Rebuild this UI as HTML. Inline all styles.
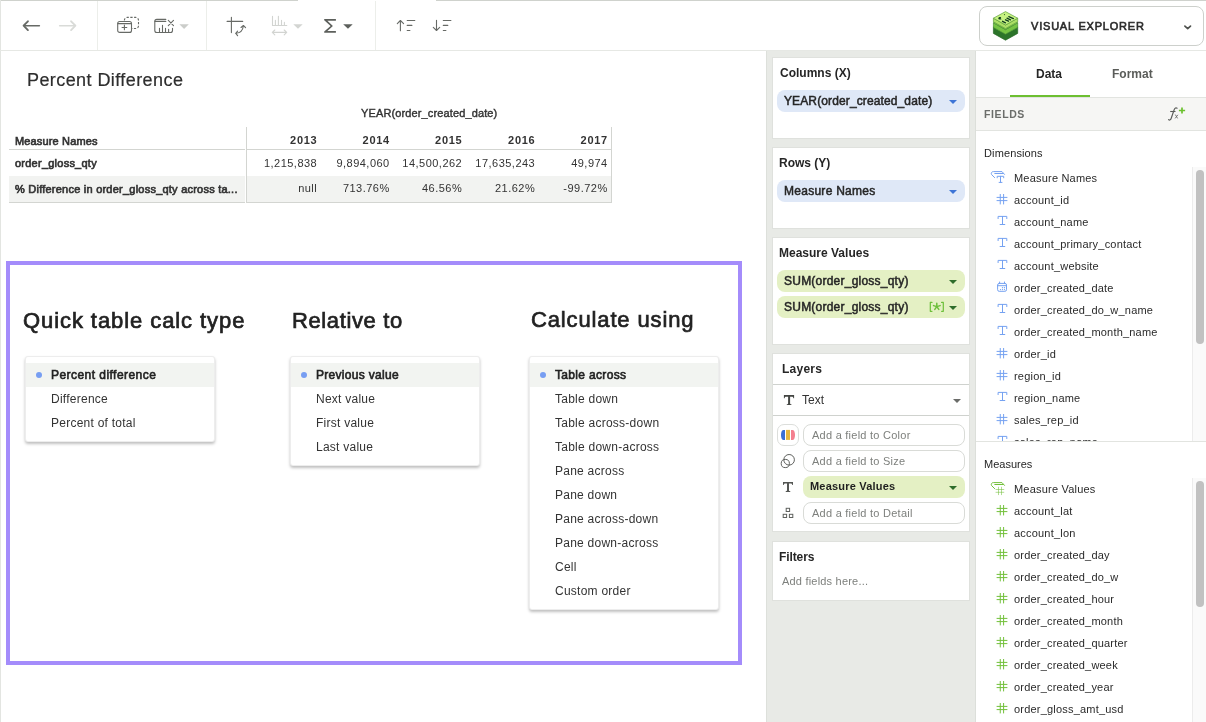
<!DOCTYPE html>
<html><head><meta charset="utf-8">
<style>
*{box-sizing:border-box;margin:0;padding:0}
html,body{width:1206px;height:722px;overflow:hidden;background:#fff}
body{position:relative;font-family:"Liberation Sans",sans-serif;color:#333}
.a{position:absolute}
.t{position:absolute;white-space:nowrap;line-height:1}
.hl{position:absolute;height:1px}
.vl{position:absolute;width:1px}
svg{position:absolute;overflow:visible}
/* menus */
.menu{position:absolute;top:356px;width:190px;background:#fff;border:1px solid rgba(0,0,0,0.07);border-radius:3px;box-shadow:0 2px 3px rgba(0,0,0,0.25);padding-top:6px;padding-bottom:6px}
.mi{position:relative;height:24px;font-size:12px;letter-spacing:0.25px;color:#333;padding-left:25px;line-height:24px;white-space:nowrap}
.mi.sel{background:#f2f4f1;color:#222;letter-spacing:0.3px;-webkit-text-stroke:0.6px #222}
.mi.sel:before{content:"";position:absolute;left:10px;top:9px;width:6px;height:6px;border-radius:50%;background:#779ef2}
/* cards */
.card{position:absolute;left:772px;width:198px;background:#fff;border:1px solid #dfe1dd}
.pill{position:absolute;left:4px;width:188px;height:22px;border-radius:8px;font-size:12px;line-height:22px;padding-left:7px;letter-spacing:0.15px;color:#222;white-space:nowrap}
.pb{background:#dfe8f7}
.pg{background:#e4f0c4}
.caret{position:absolute;width:0;height:0;border-left:4px solid transparent;border-right:4px solid transparent;border-top:4px solid #3d74d6}
.hd{font-size:22px;color:#222;-webkit-text-stroke:0.7px #222}
.fld{position:absolute;left:1014px;font-size:11px;letter-spacing:0.2px;color:#333;white-space:nowrap;line-height:1}
</style></head><body><div id="root" style="position:absolute;left:0;top:0;width:1206px;height:722px;will-change:transform">

<!-- outer borders -->
<div class="hl" style="left:0;top:0;width:298px;background:#cfd2cd"></div>
<div class="hl" style="left:436px;top:0;width:770px;background:#cfd2cd"></div>
<div class="vl" style="left:0;top:0;height:722px;background:#e3e5e1"></div>

<!-- toolbar -->
<div class="hl" style="left:0;top:50px;width:1206px;background:#e6e8e4"></div>
<div class="vl" style="left:97px;top:1px;height:49px;background:#eceeea"></div>
<div class="vl" style="left:206px;top:1px;height:49px;background:#eceeea"></div>
<div class="vl" style="left:375px;top:1px;height:49px;background:#eceeea"></div>

<!-- Visual explorer button -->
<div class="a" style="left:979px;top:6px;width:225px;height:40px;border:1px solid #cdd0cc;border-radius:8px;background:#fff"></div>
<div class="t" style="left:1031px;top:21px;font-size:11px;letter-spacing:0.8px;color:#2b2b2b;-webkit-text-stroke:0.6px #2b2b2b">VISUAL EXPLORER</div>
<svg style="left:0;top:0" width="1206" height="50" viewBox="0 0 1206 50">
<g fill="none" stroke="#676a66" stroke-width="1.5" stroke-linecap="round" stroke-linejoin="round">
 <!-- back -->
 <path d="M39.4 25.7H24.6" stroke-width="1.45"/><path d="M27.9 21.3L23.6 25.7L27.9 30.1" stroke-width="1.9"/>
</g>
<g fill="none" stroke="#d9dbd8" stroke-width="1.8" stroke-linecap="round" stroke-linejoin="round">
 <path d="M59.6 25.7H74.4" stroke-width="1.45"/><path d="M71.1 21.3L75.4 25.7L71.1 30.1" stroke-width="1.9"/>
</g>
<g fill="none" stroke="#676a66" stroke-width="1.1" stroke-linecap="round" stroke-linejoin="round">
 <!-- new sheet -->
 <path d="M119.7 21.5H129.5A2 2 0 0 1 131.5 23.5V30.4A2 2 0 0 1 129.5 32.4H119.7A2 2 0 0 1 117.7 30.4V23.5A2 2 0 0 1 119.7 21.5Z"/>
 <path d="M117.9 23.6H131.3"/>
 <path d="M122.1 27.5H126.8M124.4 25.1V29.8"/>
 <path d="M124.4 20.4V20.1A2.8 2.8 0 0 1 127.2 17.4H135.7A2.8 2.8 0 0 1 138.5 20.2V25.7A2.8 2.8 0 0 1 135.7 28.5H131.8" stroke-dasharray="2.3 1.5" stroke-linecap="butt"/>
 <!-- clear sheet -->
 <path d="M165.8 19.4H156.8A2 2 0 0 0 154.8 21.4V30.5A2 2 0 0 0 156.8 32.5H170.5A2 2 0 0 0 172.5 30.5V28.3"/>
 <path d="M155 21.4H165.8"/>
 <path d="M159.5 32.4V28.3M162.5 32.4V25.3M165.5 32.4V28.3M168.6 32.4V29.3"/>
 <path d="M168.3 20.4L173.5 25.6M173.5 20.4L168.3 25.6"/>
 <!-- swap -->
 <path d="M231.4 17.2V32.6M227.1 21.4H242.7"/>
 <path d="M236 33.3C239.5 33 242.8 31 243.3 26"/>
 <path d="M237.6 31.2L235.8 33.4L237.6 35.7M241 27.5L243.4 25.5L245.6 27.6"/>
 <!-- sort asc -->
 <path d="M400.4 20.6V30.8M397.3 23.6L400.4 20.5L403.6 23.6"/>
 <path d="M407.2 20.5H414.8M407.2 25.4H411.9M407.2 30.5H409.9"/>
 <!-- sort desc -->
 <path d="M436.5 20.2V30.4M433.3 27.4L436.5 30.5L439.7 27.4"/>
 <path d="M443.3 20.5H450.9M443.3 25.4H447.8M443.3 30.5H445.9"/>
</g>
<g fill="none" stroke="#d2d4d1" stroke-width="1.1" stroke-linecap="round" stroke-linejoin="round">
 <path d="M272.5 16.3V25.5H286.8M275.4 25.5V20.4M278.4 25.5V16.3M281.5 25.5V20.4M284.4 25.5V22.4"/>
 <path d="M272.4 32.4H286.6M274.8 30L272.3 32.4L274.8 34.8M284.2 30L286.7 32.4L284.2 34.8"/>
</g>
<!-- sigma -->
<path d="M324.2 19H335.9V20.8H327.4L332.9 25.9L327.4 31H335.9V32.8H324.2V31.6L330.6 25.9L324.2 20.2Z" fill="#5d605c"/>
<!-- carets -->
<path d="M179.4 24.2H188.8L184.1 29Z" fill="#cbcdca"/>
<path d="M293.3 24.3H302.7L298 28.7Z" fill="#d3d5d2"/>
<path d="M343.2 24.2H352.7L347.95 28.8Z" fill="#5d605c"/>
<!-- VE chevron -->
<path d="M1184.9 26.1L1187.7 28.6L1190.5 26.1" fill="none" stroke="#4f524e" stroke-width="1.7" stroke-linecap="round" stroke-linejoin="round"/>
<!-- VE logo -->
<path d="M993.4 27.2L1005.5 34.0L1017.7 27.2V33.4L1005.5 40.2L993.4 33.4Z" fill="#2c742a" stroke="#2a6a28" stroke-width="0.7" stroke-linejoin="round"/><path d="M993.4 27.2L1005.5 20.6L1017.7 27.2L1005.5 34.0Z" fill="#3d8a34" stroke="#2a6a28" stroke-width="0.7" stroke-linejoin="round"/><path d="M993.4 22.8L1005.5 29.6L1017.7 22.8V27.4L1005.5 34.2L993.4 27.4Z" fill="#76c443" stroke="#4d9438" stroke-width="0.7" stroke-linejoin="round"/><path d="M993.4 22.8L1005.5 16.200000000000003L1017.7 22.8L1005.5 29.6Z" fill="#8fd452" stroke="#4d9438" stroke-width="0.7" stroke-linejoin="round"/><path d="M993.4 18.2L1005.5 25.0L1017.7 18.2V21.8L1005.5 28.6L993.4 21.8Z" fill="#acdf66" stroke="#5f9f3c" stroke-width="0.7" stroke-linejoin="round"/><path d="M993.4 18.2L1005.5 11.6L1017.7 18.2L1005.5 25.0Z" fill="#c6f282" stroke="#5f9f3c" stroke-width="0.7" stroke-linejoin="round"/><g stroke="#123f20" stroke-width="1.3" stroke-linecap="round" fill="none">
 <path d="M1008.8 16.6L1013.4 18.6M1007 18.2L1010.5 19.9M1005.5 19.8L1008.5 21.2M1002.5 21.3L1005.5 22.8"/>
</g><path d="M998.3 18.4C998.3 17.4 999.7 16.9 1001.2 17.2L1000.6 18.3L1001.6 19.2C1000 19.9 998.3 19.4 998.3 18.4Z" fill="#123f20"/><circle cx="1004.5" cy="14.6" r="0.6" fill="#2f5f2a"/>
</svg>


<!-- main title -->
<div class="t" style="left:27px;top:71px;font-size:18px;letter-spacing:0.42px;color:#2e2e2e;-webkit-text-stroke:0.2px #2e2e2e">Percent Difference</div>

<!-- table -->
<div class="t" style="left:361px;top:108px;font-size:11px;letter-spacing:0.13px;color:#333;-webkit-text-stroke:0.4px #333">YEAR(order_created_date)</div>


<!-- table lines -->
<div class="vl" style="left:246px;top:127px;height:76px;background:#d3d5d1"></div>
<div class="vl" style="left:611px;top:127px;height:76px;background:#d3d5d1"></div>
<div class="hl" style="left:9px;top:149px;width:236px;background:#d3d5d1"></div>
<div class="hl" style="left:247px;top:149px;width:364px;background:#d3d5d1"></div>
<div class="a" style="left:9px;top:176px;width:236px;height:26px;background:#f2f3f1"></div>
<div class="a" style="left:247px;top:176px;width:364px;height:26px;background:#f2f3f1"></div>
<div class="hl" style="left:9px;top:202px;width:236px;background:#d3d5d1"></div>
<div class="hl" style="left:247px;top:202px;width:364px;background:#d3d5d1"></div>
<div class="t" style="left:15px;top:136px;font-size:11px;letter-spacing:0.15px;color:#333;-webkit-text-stroke:0.65px #333">Measure Names</div>
<div class="t" style="left:15px;top:158px;font-size:11px;letter-spacing:0.24px;color:#333;-webkit-text-stroke:0.65px #333">order_gloss_qty</div>
<div class="t" style="left:15px;top:184px;font-size:11px;letter-spacing:0.23px;color:#333;-webkit-text-stroke:0.65px #333">% Difference in order_gloss_qty across ta...</div>
<div class="t" style="right:888.5px;top:135px;font-size:11px;font-weight:bold;letter-spacing:0.75px;color:#333">2013</div>
<div class="t" style="right:888.8px;top:158px;font-size:11px;letter-spacing:0.48px;color:#333">1,215,838</div>
<div class="t" style="right:888.8px;top:183px;font-size:11px;letter-spacing:0.48px;color:#333">null</div>
<div class="t" style="right:816px;top:135px;font-size:11px;font-weight:bold;letter-spacing:0.75px;color:#333">2014</div>
<div class="t" style="right:816.3px;top:158px;font-size:11px;letter-spacing:0.48px;color:#333">9,894,060</div>
<div class="t" style="right:816.3px;top:183px;font-size:11px;letter-spacing:0.48px;color:#333">713.76%</div>
<div class="t" style="right:743.5px;top:135px;font-size:11px;font-weight:bold;letter-spacing:0.75px;color:#333">2015</div>
<div class="t" style="right:743.8px;top:158px;font-size:11px;letter-spacing:0.48px;color:#333">14,500,262</div>
<div class="t" style="right:743.8px;top:183px;font-size:11px;letter-spacing:0.48px;color:#333">46.56%</div>
<div class="t" style="right:670.5px;top:135px;font-size:11px;font-weight:bold;letter-spacing:0.75px;color:#333">2016</div>
<div class="t" style="right:670.8px;top:158px;font-size:11px;letter-spacing:0.48px;color:#333">17,635,243</div>
<div class="t" style="right:670.8px;top:183px;font-size:11px;letter-spacing:0.48px;color:#333">21.62%</div>
<div class="t" style="right:598px;top:135px;font-size:11px;font-weight:bold;letter-spacing:0.75px;color:#333">2017</div>
<div class="t" style="right:598.3px;top:158px;font-size:11px;letter-spacing:0.48px;color:#333">49,974</div>
<div class="t" style="right:598.3px;top:183px;font-size:11px;letter-spacing:0.48px;color:#333">-99.72%</div>

<!-- purple box -->
<div class="a" style="left:6px;top:261px;width:736px;height:404px;border:4px solid #a48cfb"></div>

<div class="t hd" style="left:23px;top:310px;letter-spacing:0.92px">Quick table calc type</div>
<div class="t hd" style="left:292px;top:310px;letter-spacing:0.62px">Relative to</div>
<div class="t hd" style="left:531px;top:309px;letter-spacing:0.86px">Calculate using</div>

<div class="menu" style="left:25px">
<div class="mi sel" style="letter-spacing:0.45px">Percent difference</div>
<div class="mi">Difference</div>
<div class="mi">Percent of total</div>
</div>
<div class="menu" style="left:290px">
<div class="mi sel">Previous value</div>
<div class="mi">Next value</div>
<div class="mi">First value</div>
<div class="mi">Last value</div>
</div>
<div class="menu" style="left:529px">
<div class="mi sel" style="letter-spacing:0.33px">Table across</div>
<div class="mi">Table down</div>
<div class="mi">Table across-down</div>
<div class="mi">Table down-across</div>
<div class="mi">Pane across</div>
<div class="mi">Pane down</div>
<div class="mi">Pane across-down</div>
<div class="mi">Pane down-across</div>
<div class="mi">Cell</div>
<div class="mi">Custom order</div>
</div>

<!-- middle panel -->
<div class="a" style="left:766px;top:51px;width:210px;height:671px;background:#e8eae6"></div>
<div class="vl" style="left:975px;top:51px;height:671px;background:#dcdfda"></div>
<div class="vl" style="left:766px;top:51px;height:671px;background:#dde0db"></div>


<div class="card" style="top:57px;height:82px"></div>
<div class="card" style="top:147px;height:82px"></div>
<div class="card" style="top:237px;height:108px"></div>
<div class="card" style="top:353px;height:179px"></div>
<div class="card" style="top:541px;height:60px"></div>
<div class="t" style="left:780px;top:67px;font-size:12px;font-weight:bold;color:#262626">Columns (X)</div>
<div class="t" style="left:779px;top:157px;font-size:12px;font-weight:bold;color:#262626">Rows (Y)</div>
<div class="t" style="left:779px;top:247px;font-size:12px;font-weight:bold;color:#262626">Measure Values</div>
<div class="t" style="left:782px;top:363px;font-size:12px;font-weight:bold;letter-spacing:0.25px;color:#262626">Layers</div>
<div class="t" style="left:779px;top:551px;font-size:12px;font-weight:bold;letter-spacing:-0.1px;color:#262626">Filters</div>
<div class="t" style="left:782px;top:576px;font-size:11px;letter-spacing:0.2px;color:#7e807d">Add fields here...</div>

<div class="a pb" style="left:777px;top:90px;width:188px;height:22px;border-radius:8px"></div>
<div class="t" style="left:784px;top:95px;font-size:12px;letter-spacing:0.12px;color:#262626;-webkit-text-stroke:0.5px #262626">YEAR(order_created_date)</div>
<div class="caret" style="left:949px;top:100px"></div>
<div class="a pb" style="left:777px;top:180px;width:188px;height:22px;border-radius:8px"></div>
<div class="t" style="left:784px;top:185px;font-size:12px;letter-spacing:0.27px;color:#262626;-webkit-text-stroke:0.5px #262626">Measure Names</div>
<div class="caret" style="left:949px;top:190px"></div>

<div class="a pg" style="left:777px;top:270px;width:188px;height:22px;border-radius:8px"></div>
<div class="t" style="left:784px;top:275px;font-size:12px;letter-spacing:0.23px;color:#262626;-webkit-text-stroke:0.5px #262626">SUM(order_gloss_qty)</div>
<div class="caret" style="left:949px;top:280px;border-top-color:#2e6d2b"></div>
<div class="a pg" style="left:777px;top:296px;width:188px;height:22px;border-radius:8px"></div>
<div class="t" style="left:784px;top:301px;font-size:12px;letter-spacing:0.23px;color:#262626;-webkit-text-stroke:0.5px #262626">SUM(order_gloss_qty)</div>
<svg style="left:925px;top:298px" width="24" height="18" viewBox="925 298 24 18"><g fill="none" stroke="#6cbf3a" stroke-width="1.2" stroke-linecap="round" stroke-linejoin="round">
<path d="M932 302.4H930.3V311.3H932M941.6 302.4H943.3V311.3H941.6"/>
<path d="M936.8 306.6V303.3M936.8 306.6L933.5 305.6M936.8 306.6L940.1 305.6M936.8 306.6L934.8 309.4M936.8 306.6L938.8 309.4" stroke-width="1.5"/>
</g></svg>
<div class="caret" style="left:949px;top:306px;border-top-color:#2e6d2b"></div>

<div class="hl" style="left:773px;top:384px;width:196px;background:#cfd2ce"></div>
<div class="hl" style="left:773px;top:415px;width:196px;background:#cfd2ce"></div>
<div class="t" style="left:802px;top:394px;font-size:12px;color:#333">Text</div>
<div class="caret" style="left:953px;top:399px;border-top-color:#6a6c69;border-left-width:4px;border-right-width:4px"></div>

<div class="a" style="left:777px;top:424px;width:22px;height:22px;border:1px solid #dcdedb;border-radius:7px;background:#fff"></div>
<div class="a" style="left:803px;top:424px;width:162px;height:22px;border:1px solid #d9dbd7;border-radius:8px;background:#fff"></div>
<div class="a" style="left:803px;top:450px;width:162px;height:22px;border:1px solid #d9dbd7;border-radius:8px;background:#fff"></div>
<div class="a pg" style="left:803px;top:476px;width:162px;height:22px;border-radius:8px"></div>
<div class="a" style="left:803px;top:502px;width:162px;height:22px;border:1px solid #d9dbd7;border-radius:8px;background:#fff"></div>
<div class="t" style="left:812px;top:430px;font-size:11px;letter-spacing:0.25px;color:#7e807d">Add a field to Color</div>
<div class="t" style="left:812px;top:456px;font-size:11px;letter-spacing:0.25px;color:#7e807d">Add a field to Size</div>
<div class="t" style="left:810px;top:481px;font-size:11px;font-weight:bold;letter-spacing:0.2px;color:#1f1f1f">Measure Values</div>
<div class="caret" style="left:949px;top:486px;border-top-color:#2e6d2b"></div>
<div class="t" style="left:812px;top:508px;font-size:11px;letter-spacing:0.25px;color:#7e807d">Add a field to Detail</div>

<svg style="left:766px;top:380px" width="40" height="150" viewBox="766 380 40 150">
 <path d="M783.9 395.1H794.1V398.2H793.4C793.2 397.1 792.8 396.7 791.8 396.7H790.1V403.3C790.1 403.9 790.5 404.2 791.4 404.3V405.1H786.8V404.3C787.7 404.2 788.1 403.9 788.1 403.3V396.7H786.2C785.2 396.7 784.8 397.1 784.6 398.2H783.9Z" fill="#444643"/>
 <path d="M783 482H793V485H792.3C792.1 484 791.7 483.5 790.8 483.5H789V490.3C789 490.9 789.4 491.1 790.3 491.2V491.9H785.7V491.2C786.6 491.1 787 490.9 787 490.3V483.5H785.2C784.3 483.5 783.9 484 783.7 485H783Z" fill="#555754"/>
  <path d="M785 429.9V439.9H783.5C782 439.9 781 438 781 434.9C781 431.8 782 429.9 783.5 429.9Z" fill="#3b6fd6"/>
 <rect x="786" y="429.9" width="4" height="10" fill="#e5b63f"/>
 <path d="M791 429.9V439.9H792.5C794 439.9 795 438 795 434.9C795 431.8 794 429.9 792.5 429.9Z" fill="#f4808f"/>
 <g fill="none" stroke="#5f615e" stroke-width="1">
  <circle cx="789.1" cy="459.8" r="5.3"/>
  <circle cx="785.3" cy="463.5" r="4.1"/>
  <path d="M785.3 459.4 A4.1 4.1 0 0 1 789.4 463.5" stroke="none"/>
  <rect x="786.2" y="508.3" width="3.4" height="3.2"/>
  <rect x="783.2" y="514.3" width="3.4" height="3.2"/>
  <rect x="789.4" y="514.3" width="3.4" height="3.2"/>
 </g>
</svg>

<!-- right panel -->

<div class="a" style="left:976px;top:51px;width:230px;height:671px;background:#fff"></div>
<div class="t" style="left:1036px;top:68px;font-size:12px;font-weight:bold;color:#262626">Data</div>
<div class="t" style="left:1112px;top:68px;font-size:12px;font-weight:bold;color:#5a5c59">Format</div>
<div class="a" style="left:1010px;top:95px;width:80px;height:2px;background:#6dbf31"></div>
<div class="a" style="left:976px;top:97px;width:230px;height:34px;background:#f6f6f4;border-top:1px solid #e2e4e0;border-bottom:1px solid #e2e4e0"></div>
<div class="t" style="left:984px;top:109px;font-size:10.5px;font-weight:bold;letter-spacing:0.6px;color:#6b6d6a">FIELDS</div>
<div class="t" style="left:984px;top:148px;font-size:11px;letter-spacing:0.12px;color:#262626">Dimensions</div>
<div class="t" style="left:984px;top:459px;font-size:11px;letter-spacing:0px;color:#262626">Measures</div>
<div class="hl" style="left:976px;top:441px;width:230px;background:#e2e4e0"></div>
<!-- scroll tracks -->
<div class="a" style="left:1192px;top:167px;width:14px;height:274px;background:#fafafa;border-left:1px solid #ececec"></div>
<div class="a" style="left:1196px;top:170px;width:8px;height:174px;border-radius:4px;background:#c1c1c1"></div>
<div class="a" style="left:1192px;top:478px;width:14px;height:244px;background:#fafafa;border-left:1px solid #ececec"></div>
<div class="a" style="left:1196px;top:481px;width:8px;height:126px;border-radius:4px;background:#c1c1c1"></div>
<div class="a" style="left:976px;top:166px;width:216px;height:275px;overflow:hidden">
<div class="t" style="left:38px;top:7px;font-size:11px;letter-spacing:0.2px;color:#2a2a2a">Measure Names</div>
<div class="t" style="left:38px;top:29px;font-size:11px;letter-spacing:0.2px;color:#2a2a2a">account_id</div>
<div class="t" style="left:38px;top:51px;font-size:11px;letter-spacing:0.2px;color:#2a2a2a">account_name</div>
<div class="t" style="left:38px;top:73px;font-size:11px;letter-spacing:0.2px;color:#2a2a2a">account_primary_contact</div>
<div class="t" style="left:38px;top:95px;font-size:11px;letter-spacing:0.2px;color:#2a2a2a">account_website</div>
<div class="t" style="left:38px;top:117px;font-size:11px;letter-spacing:0.2px;color:#2a2a2a">order_created_date</div>
<div class="t" style="left:38px;top:139px;font-size:11px;letter-spacing:0.2px;color:#2a2a2a">order_created_do_w_name</div>
<div class="t" style="left:38px;top:161px;font-size:11px;letter-spacing:0.2px;color:#2a2a2a">order_created_month_name</div>
<div class="t" style="left:38px;top:183px;font-size:11px;letter-spacing:0.2px;color:#2a2a2a">order_id</div>
<div class="t" style="left:38px;top:205px;font-size:11px;letter-spacing:0.2px;color:#2a2a2a">region_id</div>
<div class="t" style="left:38px;top:227px;font-size:11px;letter-spacing:0.2px;color:#2a2a2a">region_name</div>
<div class="t" style="left:38px;top:249px;font-size:11px;letter-spacing:0.2px;color:#2a2a2a">sales_rep_id</div>
<div class="t" style="left:38px;top:271px;font-size:11px;letter-spacing:0.2px;color:#2a2a2a">sales_rep_name</div>
<svg style="left:-976px;top:-166px" width="1206" height="722" viewBox="0 0 1206 722"><g fill="none" stroke-width="1.0" stroke-linecap="round" stroke-linejoin="round"><path transform="translate(0 0)" d="M1004.5 174.4L1002 171.6H993.4C991.6 171.6 990.8 173.2 991.6 174.6L994.6 177.6M994.8 173.5H1003.2" stroke="#75a2f1"/><path transform="translate(0 0)" d="M997.2 177.8V176.3H1003.7V177.8M1000.5 176.3V182.4M999.1 182.4H1002" stroke="#75a2f1"/><path transform="translate(996 204)" d="M4.25 -9.6V0M7.6 -9.6V0M1 -6.6H11M1 -3.4H11" stroke="#75a2f1"/><path transform="translate(996 226)" d="M2.1 -7.4V-9.6H10.8V-7.4M6.5 -9.6V-1.5M4.1 -1.5H8.8" stroke="#75a2f1"/><path transform="translate(996 248)" d="M2.1 -7.4V-9.6H10.8V-7.4M6.5 -9.6V-1.5M4.1 -1.5H8.8" stroke="#75a2f1"/><path transform="translate(996 270)" d="M2.1 -7.4V-9.6H10.8V-7.4M6.5 -9.6V-1.5M4.1 -1.5H8.8" stroke="#75a2f1"/><g transform="translate(996 292)" stroke="#75a2f1"><rect x="1.6" y="-8.6" width="8.9" height="7.9" rx="1.6"/><path d="M1.6 -6.3H10.5M3.6 -10V-8.4M8.5 -10V-8.4"/></g><g transform="translate(996 292)" fill="#75a2f1"><circle cx="6.5" cy="-4.3" r="0.65"/><circle cx="8.5" cy="-4.3" r="0.65"/><circle cx="4.5" cy="-2.4" r="0.65"/><circle cx="6.5" cy="-2.4" r="0.65"/><circle cx="8.5" cy="-2.4" r="0.65"/></g><path transform="translate(996 314)" d="M2.1 -7.4V-9.6H10.8V-7.4M6.5 -9.6V-1.5M4.1 -1.5H8.8" stroke="#75a2f1"/><path transform="translate(996 336)" d="M2.1 -7.4V-9.6H10.8V-7.4M6.5 -9.6V-1.5M4.1 -1.5H8.8" stroke="#75a2f1"/><path transform="translate(996 358)" d="M4.25 -9.6V0M7.6 -9.6V0M1 -6.6H11M1 -3.4H11" stroke="#75a2f1"/><path transform="translate(996 380)" d="M4.25 -9.6V0M7.6 -9.6V0M1 -6.6H11M1 -3.4H11" stroke="#75a2f1"/><path transform="translate(996 402)" d="M2.1 -7.4V-9.6H10.8V-7.4M6.5 -9.6V-1.5M4.1 -1.5H8.8" stroke="#75a2f1"/><path transform="translate(996 424)" d="M4.25 -9.6V0M7.6 -9.6V0M1 -6.6H11M1 -3.4H11" stroke="#75a2f1"/><path transform="translate(996 446)" d="M2.1 -7.4V-9.6H10.8V-7.4M6.5 -9.6V-1.5M4.1 -1.5H8.8" stroke="#75a2f1"/></g></svg></div>
<div class="a" style="left:976px;top:478px;width:216px;height:244px;overflow:hidden">
<div class="t" style="left:38px;top:6px;font-size:11px;letter-spacing:0.2px;color:#2a2a2a">Measure Values</div>
<div class="t" style="left:38px;top:28px;font-size:11px;letter-spacing:0.2px;color:#2a2a2a">account_lat</div>
<div class="t" style="left:38px;top:50px;font-size:11px;letter-spacing:0.2px;color:#2a2a2a">account_lon</div>
<div class="t" style="left:38px;top:72px;font-size:11px;letter-spacing:0.2px;color:#2a2a2a">order_created_day</div>
<div class="t" style="left:38px;top:94px;font-size:11px;letter-spacing:0.2px;color:#2a2a2a">order_created_do_w</div>
<div class="t" style="left:38px;top:116px;font-size:11px;letter-spacing:0.2px;color:#2a2a2a">order_created_hour</div>
<div class="t" style="left:38px;top:138px;font-size:11px;letter-spacing:0.2px;color:#2a2a2a">order_created_month</div>
<div class="t" style="left:38px;top:160px;font-size:11px;letter-spacing:0.2px;color:#2a2a2a">order_created_quarter</div>
<div class="t" style="left:38px;top:182px;font-size:11px;letter-spacing:0.2px;color:#2a2a2a">order_created_week</div>
<div class="t" style="left:38px;top:204px;font-size:11px;letter-spacing:0.2px;color:#2a2a2a">order_created_year</div>
<div class="t" style="left:38px;top:226px;font-size:11px;letter-spacing:0.2px;color:#2a2a2a">order_gloss_amt_usd</div>
<svg style="left:-976px;top:-478px" width="1206" height="722" viewBox="0 0 1206 722"><g fill="none" stroke-width="1.0" stroke-linecap="round" stroke-linejoin="round"><path transform="translate(0 311)" d="M1004.5 174.4L1002 171.6H993.4C991.6 171.6 990.8 173.2 991.6 174.6L994.6 177.6M994.8 173.5H1003.2" stroke="#72c03a"/><path transform="translate(0 311)" d="M998.5 176.2V183.7M1001.5 176.2V183.7M996 178.5H1003.8M996 181.3H1003.8" stroke="#72c03a" opacity="0.55"/><path transform="translate(996 515)" d="M4.25 -9.6V0M7.6 -9.6V0M1 -6.6H11M1 -3.4H11" stroke="#72c03a"/><path transform="translate(996 537)" d="M4.25 -9.6V0M7.6 -9.6V0M1 -6.6H11M1 -3.4H11" stroke="#72c03a"/><path transform="translate(996 559)" d="M4.25 -9.6V0M7.6 -9.6V0M1 -6.6H11M1 -3.4H11" stroke="#72c03a"/><path transform="translate(996 581)" d="M4.25 -9.6V0M7.6 -9.6V0M1 -6.6H11M1 -3.4H11" stroke="#72c03a"/><path transform="translate(996 603)" d="M4.25 -9.6V0M7.6 -9.6V0M1 -6.6H11M1 -3.4H11" stroke="#72c03a"/><path transform="translate(996 625)" d="M4.25 -9.6V0M7.6 -9.6V0M1 -6.6H11M1 -3.4H11" stroke="#72c03a"/><path transform="translate(996 647)" d="M4.25 -9.6V0M7.6 -9.6V0M1 -6.6H11M1 -3.4H11" stroke="#72c03a"/><path transform="translate(996 669)" d="M4.25 -9.6V0M7.6 -9.6V0M1 -6.6H11M1 -3.4H11" stroke="#72c03a"/><path transform="translate(996 691)" d="M4.25 -9.6V0M7.6 -9.6V0M1 -6.6H11M1 -3.4H11" stroke="#72c03a"/><path transform="translate(996 713)" d="M4.25 -9.6V0M7.6 -9.6V0M1 -6.6H11M1 -3.4H11" stroke="#72c03a"/></g></svg></div>
<svg style="left:1160px;top:100px" width="32" height="28" viewBox="1160 100 32 28">
 <path d="M1168.6 119.6C1169.6 120.6 1170.8 119.8 1171.4 117.8L1174.2 109.6C1174.9 107.8 1176 107.4 1177.1 108.2" fill="none" stroke="#5a5c59" stroke-width="1.2" stroke-linecap="round"/>
 <path d="M1170.2 111.5H1175.5" stroke="#5a5c59" stroke-width="1.1"/>
 <path d="M1175.3 114.6L1177.6 118.4M1177.9 114.8L1175.1 118.4" stroke="#6a6c69" stroke-width="0.9"/>
 <path d="M1178.9 110.5H1185.1M1182 107.4V113.6" stroke="#6cc12e" stroke-width="1.7"/>
</svg>


</div></body></html>
